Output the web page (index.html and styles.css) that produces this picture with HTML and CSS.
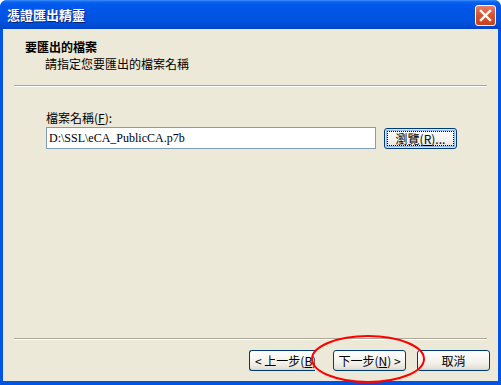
FILE: index.html
```html
<!DOCTYPE html>
<html lang="zh-Hant">
<head>
  <meta charset="UTF-8">
  <title>憑證匯出精靈</title>
  <link rel="stylesheet" href="styles.css">
</head>
<body>
  <div class="window">
    <div class="titlebar">
      <span class="title">憑證匯出精靈</span>
      <span class="close">
        <svg width="15" height="15" viewBox="0 0 15 15">
          <path d="M3 3 L12 12 M12 3 L3 12" stroke="#fff" stroke-width="2.4" stroke-linecap="square"/>
        </svg>
      </span>
    </div>
    <div class="client">
      <div class="header">
        <div class="header-title">要匯出的檔案</div>
        <div class="header-sub">請指定您要匯出的檔案名稱</div>
      </div>
      <div class="sep"></div>
      <div class="content">
        <div class="field-label">檔案名稱(<u>F</u>):</div>
        <div class="field-row">
          <div class="input">D:\SSL\eCA_PublicCA.p7b</div>
          <span class="btn btn-browse">瀏覽(<u>R</u>)...</span>
        </div>
      </div>
      <div class="sep"></div>
      <div class="footer">
        <span class="btn btn-back">&lt; 上一步(<u>B</u>)</span>
        <span class="btn btn-next">下一步(<u>N</u>) &gt;</span>
        <span class="btn btn-cancel">取消</span>
      </div>
      <!-- red ring drawn over the next button -->
      <svg class="highlight" width="120" height="54" viewBox="0 0 120 54">
        <ellipse cx="58" cy="26" rx="56" ry="23" fill="none" stroke="#ff0000" stroke-width="2"/>
      </svg>
    </div>
  </div>
</body>
</html>
```

FILE: styles.css
```css
* {
  margin: 0;
  padding: 0;
  box-sizing: border-box;
}
body {
  background: #ffffff;
  font-family: "Noto Sans CJK TC", "Liberation Sans", sans-serif;
  font-size: 12px;
  color: #000000;
}
.window {
  width: 501px;
  height: 385px;
  display: flex;
  flex-direction: column;
  background: #0054e3;
  border-radius: 7px 7px 0 0;
}
.titlebar {
  height: 29px;
  display: flex;
  align-items: center;
  justify-content: space-between;
  padding: 0 5px 0 7px;
  border-radius: 7px 7px 0 0;
  background: linear-gradient(to bottom, #3d8ff7 0px, #0a62ec 2px, #0058ee 5px, #0055e6 12px, #0053e0 20px, #004bd4 26px, #0042c2 29px);
}
.title {
  color: #ffffff;
  font-size: 13px;
  font-weight: bold;
  line-height: 15px;
  text-shadow: 1px 1px 0 #0a1e6e;
}
.close {
  width: 21px;
  height: 21px;
  margin-top: 2px;
  display: flex;
  align-items: center;
  justify-content: center;
  border: 1px solid #ffffff;
  border-radius: 3px;
  background: linear-gradient(to bottom, #e8806a, #d9532f 45%, #c8421c);
}
.client {
  position: relative;
  flex: 1;
  margin: 0 3px 4px;
  background: #ece9d8;
  display: flex;
  flex-direction: column;
}
.header {
  height: 56px;
  padding: 10px 0 0 22px;
}
.header-title {
  font-weight: bold;
  line-height: 15px;
}
.header-sub {
  margin-top: 2px;
  padding-left: 20px;
  line-height: 15px;
}
.sep {
  height: 2px;
  margin: 0 11px;
  border-top: 1px solid #aca899;
  border-bottom: 1px solid #ffffff;
}
.content {
  flex: 1;
  padding: 23px 0 0 43px;
}
.field-label {
  line-height: 15px;
}
.field-row {
  margin-top: 2px;
  display: flex;
  align-items: flex-start;
  gap: 8px;
}
.input {
  width: 330px;
  height: 22px;
  border: 1px solid #7f9db9;
  background: #ffffff;
  padding: 0 0 0 2px;
  font-family: "Liberation Serif", serif;
  font-size: 12px;
  line-height: 20px;
}
.btn {
  height: 21px;
  width: 73px;
  display: flex;
  align-items: center;
  justify-content: center;
  border: 1px solid #003c74;
  border-radius: 3px;
  background: linear-gradient(to bottom, #ffffff, #f3f2ec 60%, #e6e3d8 90%, #d6d0c5);
  line-height: 15px;
  white-space: nowrap;
}
.btn-browse {
  margin-top: 1px;
  box-shadow: inset 0 0 0 1px #cee7ff, inset 0 0 0 2px #98b8ea;
  outline: 1px dotted #000000;
  outline-offset: -4px;
}
.footer {
  height: 41px;
  display: flex;
  align-items: flex-start;
  padding: 10px 0 0 246px;
}
.btn-back {
  width: 66px;
  justify-content: flex-start;
  padding-left: 5px;
  overflow: hidden;
  border-right: none;
  border-radius: 3px 0 0 3px;
}
.btn-next {
  margin-left: 18px;
}
.btn-cancel {
  margin-left: 11px;
}
.highlight {
  position: absolute;
  left: 307px;
  top: 304px;
}
```
